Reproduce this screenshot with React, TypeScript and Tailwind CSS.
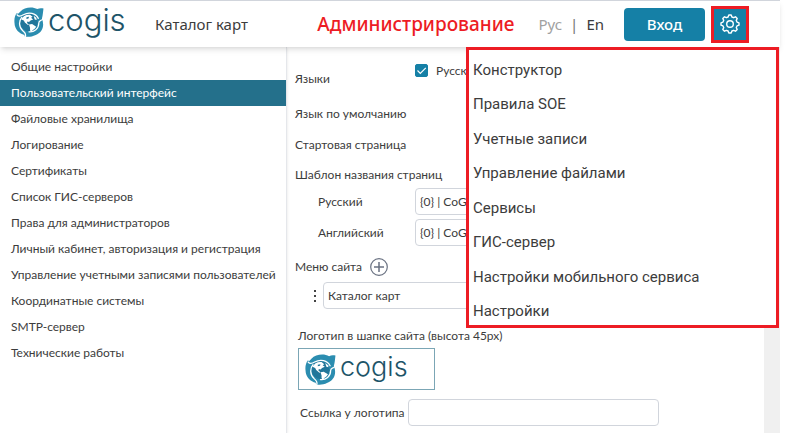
import { useState } from 'react';
import type { ReactNode } from 'react';
import { clsx } from 'clsx';

const sections = [
  'Общие настройки',
  'Пользовательский интерфейс',
  'Файловые хранилища',
  'Логирование',
  'Сертификаты',
  'Список ГИС-серверов',
  'Права для администраторов',
  'Личный кабинет, авторизация и регистрация',
  'Управление учетными записями пользователей',
  'Координатные системы',
  'SMTP-сервер',
  'Технические работы',
];

const adminMenu = [
  'Конструктор',
  'Правила SOE',
  'Учетные записи',
  'Управление файлами',
  'Сервисы',
  'ГИС-сервер',
  'Настройки мобильного сервиса',
  'Настройки',
];

const Globe = ({ size }: { size: number }) => (
  <svg width={size} height={size} viewBox="0 0 58 58" aria-hidden="true" className="shrink-0">
    {/* Three blades around the globe */}
    <path
      d="M12 9C20 0 36 -1 45 4C49 2 53 2 57 3C56 10 56 16 54 22C60 38 54 49 42 54C34 58 27 58 21 57L20 54C11 52 1 43 1 31C0 23 2 16 5 12L8 13Z"
      fill="#2b8db0"
    />
    <circle cx="29" cy="30" r="17" fill="#21769a" />
    <g fill="none" stroke="#fff" strokeWidth="2.4" strokeLinecap="round">
      <path d="M6 15C9 19 13 18 18 15C29 9 42 12 47 22" />
      <path d="M56 23C52 28 48 25 48 31C48 42 39 49 29 48" />
      <path d="M22 57C24 51 21 50 17 46C9 39 9 27 15 20" />
    </g>
    {/* Continents */}
    <path
      d="M14 24C17 18 23 14 31 15L36 19L33 21L37 24L32 26L29 29L26 28L25 31L29 34L27 35L21 30L19 26Z"
      fill="#fff"
    />
    <path d="M29 34L35 33L43 38L40 42L36 45L33 49L31 45L31 40Z" fill="#fff" />
    <path d="M38 17L43 21L44 25L40 24Z" fill="#fff" />
    <path d="M24 20L29 19L28 22L24 23Z" fill="#21769a" />
  </svg>
);

const Gear = () => (
  <svg
    width="20"
    height="20"
    viewBox="0 0 20 20"
    fill="none"
    stroke="currentColor"
    strokeWidth="1.4"
    strokeLinejoin="round"
    aria-hidden="true"
  >
    <path d="M8.1 3L8.8 1H11.2L11.9 3L13.6 3.7L15.5 2.8L17.2 4.5L16.3 6.4L17 8.1L19 8.8V11.2L17 11.9L16.3 13.6L17.2 15.5L15.5 17.2L13.6 16.3L11.9 17L11.2 19H8.8L8.1 17L6.4 16.3L4.5 17.2L2.8 15.5L3.7 13.6L3 11.9L1 11.2V8.8L3 8.1L3.7 6.4L2.8 4.5L4.5 2.8L6.4 3.7Z" />
    <circle cx="10" cy="10" r="3.3" />
  </svg>
);

const Header = ({ onToggle }: { onToggle: () => void }) => (
  <header className="relative z-10 flex h-[47px] items-center border-t border-gray-300 bg-white pr-[31px] pl-[14px] font-['Noto_Sans',sans-serif] shadow-md">
    <a href="#home" className="mb-1 flex w-[141px] items-center gap-1">
      <Globe size={30} />
      <span className="-mt-1 font-[Inter] text-[31px] leading-9 font-light text-[#1d5468]">
        cogis
      </span>
    </a>
    <a href="#maps" className="text-[15px]">
      Каталог карт
    </a>
    <strong className="ml-auto text-[19px] font-medium text-[#ed1c24]">Администрирование</strong>
    <div className="ml-6 flex gap-2 text-[15px]">
      <button type="button" className="text-neutral-400">
        Рус
      </button>
      <span className="text-neutral-500">|</span>
      <button type="button">En</button>
    </div>
    <button
      type="button"
      className="ml-5 h-[33px] w-[81px] rounded-[4px] bg-[#1580a6] text-[15px] font-medium text-white"
    >
      Вход
    </button>
    <button
      type="button"
      aria-label="Администрирование"
      onClick={onToggle}
      className="ml-[6px] flex h-[37px] w-[38px] items-center justify-center border-3 border-[#ed1c24] bg-[#1580a6] text-white"
    >
      <Gear />
    </button>
  </header>
);

const Sidebar = () => {
  const [active, setActive] = useState(1);
  return (
    <nav className="w-[287px] shrink-0 border-r border-gray-200 pt-[7px] shadow-sm">
      {sections.map((name, i) => (
        <button
          key={name}
          type="button"
          onClick={() => setActive(i)}
          className={clsx(
            'block h-[26px] w-full pl-[11px] text-left whitespace-nowrap',
            i === active && 'bg-[#24708b] text-white',
          )}
        >
          {name}
        </button>
      ))}
    </nav>
  );
};

const Row = ({ children }: { children: ReactNode }) => (
  <div className="flex h-[31px] items-center">{children}</div>
);

const fieldClass = 'h-[27px] rounded-[4px] border border-gray-300 bg-white px-1';

const SettingsForm = () => (
  <form className="min-w-0 flex-1 pt-3 pl-2">
    <div className="flex h-[39px] items-center">
      <span className="w-[120px]">Языки</span>
      <label className="mb-4 flex items-center gap-2">
        <span className="relative flex">
          <input
            type="checkbox"
            defaultChecked
            className="peer h-[13px] w-[13px] appearance-none rounded-[2px] border border-[#1580a6] checked:bg-[#1580a6]"
          />
          <svg
            viewBox="0 0 13 13"
            className="pointer-events-none absolute inset-0 hidden peer-checked:block"
            fill="none"
            stroke="#fff"
            strokeWidth="1.2"
            aria-hidden="true"
          >
            <path d="M2.5 6.5L5.3 9.3L10.8 3.8" />
          </svg>
        </span>
        Русский
      </label>
    </div>
    <Row>Язык по умолчанию</Row>
    <Row>Стартовая страница</Row>
    <div className="flex h-[26px] items-center pt-1">Шаблон названия страниц</div>
    <Row>
      <label htmlFor="title-ru" className="w-[120px] pl-[23px]">
        Русский
      </label>
      <input id="title-ru" defaultValue="{0} | CoGIS" className={`w-[251px] ${fieldClass}`} />
    </Row>
    <Row>
      <label htmlFor="title-en" className="w-[120px] pl-[23px]">
        Английский
      </label>
      <input id="title-en" defaultValue="{0} | CoGIS" className={`w-[251px] ${fieldClass}`} />
    </Row>
    <div className="flex h-[34px] items-center gap-2 pt-1">
      <label htmlFor="menu-item">Меню сайта</label>
      <button type="button" aria-label="Добавить" className="text-gray-500">
        <svg width="18" height="18" viewBox="0 0 18 18" fill="none" stroke="currentColor">
          <circle cx="9" cy="9" r="8.3" strokeWidth="1.2" />
          <path d="M9 4V14M4 9H14" strokeWidth="1.5" />
        </svg>
      </button>
    </div>
    <div className="flex items-center gap-[6px] pl-[18px]">
      <svg width="4" height="12" viewBox="0 0 4 12" fill="#444" aria-hidden="true">
        <path d="M1 0H3V2H1ZM1 5H3V7H1ZM1 10H3V12H1Z" />
      </svg>
      <input id="menu-item" defaultValue="Каталог карт" className={`w-[343px] ${fieldClass}`} />
    </div>
    <div className="mt-[17px] pl-[3px]">
      <div className="h-[22px] leading-5">Логотип в шапке сайта (высота 45px)</div>
      <div className="flex h-[42px] w-[137px] items-center gap-1 border border-[#7ba6b5] pl-[6px]">
        <Globe size={31} />
        <span className="mb-1 font-[Inter] text-[27px] leading-8 font-light text-[#1d5468]">
          cogis
        </span>
      </div>
    </div>
    <div className="mt-[9px] flex items-center pl-[5px]">
      <label htmlFor="logo-link" className="w-[108px] whitespace-nowrap">
        Ссылка у логотипа
      </label>
      <input id="logo-link" className={`w-[251px] ${fieldClass}`} />
    </div>
  </form>
);

const AdminMenu = () => (
  <nav className="absolute top-0 right-px z-20 flex h-[281px] w-[313px] flex-col justify-between border-3 border-[#ed1c24] bg-white pt-[6px] pl-1 font-[Roboto,sans-serif] text-[15px]">
    {adminMenu.map((name) => (
      <a key={name} href="#admin" className="leading-7">
        {name}
      </a>
    ))}
  </nav>
);

export default function App() {
  const [open, setOpen] = useState(true);
  return (
    <div className="min-h-screen bg-white pr-[6px] font-[Lato,'Noto_Sans',sans-serif] text-[12px] text-[#3c3c3c]">
      <div className="flex min-h-screen flex-col">
        <Header onToggle={() => setOpen(!open)} />
        <div className="relative flex flex-1">
          <Sidebar />
          <SettingsForm />
          {/* Scrollbar track */}
          <div className="w-4 shrink-0 bg-[#f0f0f0]" />
          {open && <AdminMenu />}
        </div>
      </div>
    </div>
  );
}
